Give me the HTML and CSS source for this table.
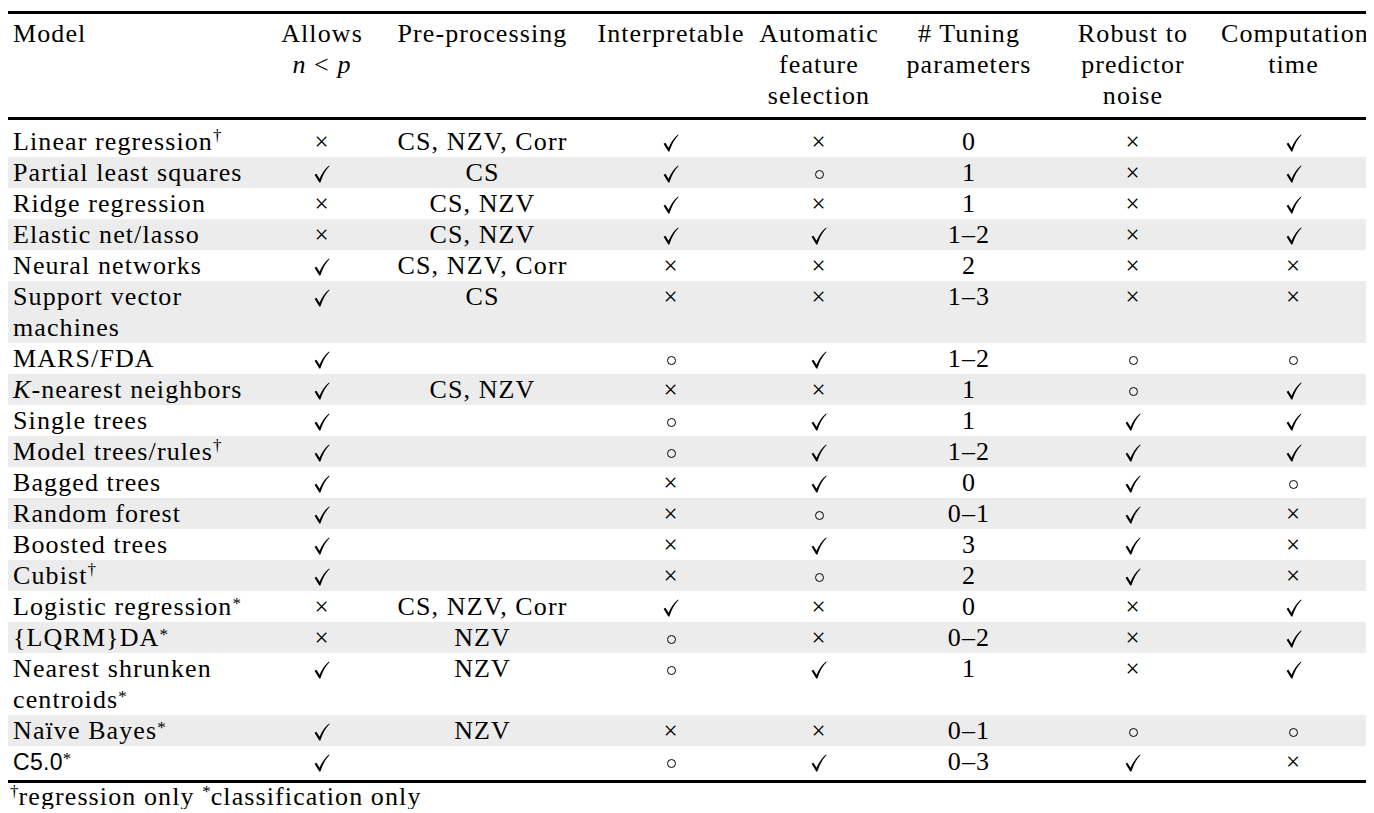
FILE: index.html
```html
<!DOCTYPE html>
<html lang="en">
<head>
<meta charset="utf-8">
<title>Model comparison</title>
<link rel="stylesheet" href="styles.css">
</head>
<body>
<svg class="defs" width="0" height="0" aria-hidden="true">
  <defs>
    <path id="ck" d="M0.6 10.4 L2.6 9.3 L5.9 14.6 C8.2 9 11.4 4.2 16 0.4 L16.6 1 C12.4 5.2 9.2 11 6.8 18.6 L5.6 18.6 Z"/>
  </defs>
</svg>
<table class="grid">
  <colgroup>
    <col class="c-model"><col class="c-allows"><col class="c-pre"><col class="c-interp"><col class="c-auto"><col class="c-tune"><col class="c-robust"><col class="c-comp">
  </colgroup>
  <thead>
    <tr>
      <th class="left">Model</th>
      <th>Allows<br><i>n</i> &lt; <i>p</i></th>
      <th>Pre-processing</th>
      <th>Interpretable</th>
      <th>Automatic<br>feature<br>selection</th>
      <th># Tuning<br>parameters</th>
      <th>Robust to<br>predictor<br>noise</th>
      <th>Computation<br>time</th>
    </tr>
  </thead>
  <tbody id="rows"></tbody>
</table>
<p class="note"><sup>†</sup>regression only <sup class="st">*</sup>classification only</p>
<script src="app.js"></script>
</body>
</html>
```

FILE: app.js
```js
var Y = 'y', N = 'n', O = 'o';
var data = [
  ['Linear regression<sup>†</sup>', N, 'CS, NZV, Corr', Y, N, '0', N, Y],
  ['Partial least squares', Y, 'CS', Y, O, '1', N, Y],
  ['Ridge regression', N, 'CS, NZV', Y, N, '1', N, Y],
  ['Elastic net/lasso', N, 'CS, NZV', Y, Y, '1–2', N, Y],
  ['Neural networks', Y, 'CS, NZV, Corr', N, N, '2', N, N],
  ['Support vector<br>machines', Y, 'CS', N, N, '1–3', N, N],
  ['MARS/FDA', Y, '', O, Y, '1–2', O, O],
  ['<i>K</i>-nearest neighbors', Y, 'CS, NZV', N, N, '1', O, Y],
  ['Single trees', Y, '', O, Y, '1', Y, Y],
  ['Model trees/rules<sup>†</sup>', Y, '', O, Y, '1–2', Y, Y],
  ['Bagged trees', Y, '', N, Y, '0', Y, O],
  ['Random forest', Y, '', N, O, '0–1', Y, N],
  ['Boosted trees', Y, '', N, Y, '3', Y, N],
  ['Cubist<sup>†</sup>', Y, '', N, O, '2', Y, N],
  ['Logistic regression<sup class="st">*</sup>', N, 'CS, NZV, Corr', Y, N, '0', N, Y],
  ['{LQRM}DA<sup class="st">*</sup>', N, 'NZV', O, N, '0–2', N, Y],
  ['Nearest shrunken<br>centroids<sup class="st">*</sup>', Y, 'NZV', O, Y, '1', N, Y],
  ['Naïve Bayes<sup class="st">*</sup>', Y, 'NZV', N, N, '0–1', O, O],
  ['<span class="sans">C5.0</span><sup class="st">*</sup>', Y, '', O, Y, '0–3', Y, N]
];
function sym(v) {
  if (v === Y) return '<svg class="ck" viewBox="0 0 17 19" width="16" height="18" aria-label="yes"><use href="#ck"/></svg>';
  if (v === N) return '<span class="x">×</span>';
  if (v === O) return '<span class="circ" aria-label="partly"></span>';
  return v;
}
var html = '';
data.forEach(function (r) {
  html += '<tr><td class="left">' + r[0] + '</td>';
  for (var i = 1; i < r.length; i++) {
    html += '<td>' + (i === 2 || i === 5 ? r[i] : sym(r[i])) + '</td>';
  }
  html += '</tr>';
});
document.getElementById('rows').innerHTML = html;
```

FILE: styles.css
```css
html, body {
  background: #fff;
}
body {
  margin: 11px 8px 0 8px;
  font-family: "Liberation Serif", "Times New Roman", "DejaVu Serif", serif;
  font-size: 26px;
  letter-spacing: 1.1px;
  color: #000;
}
.defs {
  position: absolute;
  width: 0;
  height: 0;
}
.grid {
  width: 1358px;
  border-collapse: collapse;
  table-layout: fixed;
}
.c-model { width: 268px; }
.c-allows { width: 92px; }
.c-pre { width: 229px; }
.c-interp { width: 148px; }
.c-auto { width: 148px; }
.c-tune { width: 152px; }
.c-robust { width: 176px; }
.c-comp { width: 145px; }

.grid th,
.grid td {
  padding: 0;
  text-align: center;
  vertical-align: top;
  white-space: nowrap;
  line-height: 31px;
  font-weight: normal;
}
.grid td {
  height: 31px;
}
.grid th {
  padding-top: 4px;
  padding-bottom: 6px;
  border-top: 3px solid #000;
  border-bottom: 3px solid #000;
}
.grid .left {
  text-align: left;
  padding-left: 5px;
}
.grid tbody tr:first-child td {
  padding-top: 6px;
}
.grid tbody tr:nth-child(even) td {
  background: #ececec;
}
.grid tbody tr:last-child td {
  border-bottom: 3px solid #000;
  padding-bottom: 3px;
}
sup {
  font-size: 17px;
  line-height: 0;
  vertical-align: 9px;
  letter-spacing: 0;
}
sup.st {
  vertical-align: 6px;
}
.sans {
  font-family: "Liberation Sans", "DejaVu Sans", sans-serif;
  font-size: 23px;
  line-height: 1;
  letter-spacing: 0.3px;
}
.x {
  font-size: 25px;
  line-height: 1;
}
.ck {
  vertical-align: -2px;
  fill: #000;
}
.circ {
  display: inline-block;
  width: 9px;
  height: 9px;
  box-sizing: border-box;
  border: 1.2px solid #000;
  border-radius: 50%;
  vertical-align: 2px;
}
.note {
  margin: 2px 0 0 2px;
  line-height: 24px;
}
.note sup {
  vertical-align: 8px;
}
```
